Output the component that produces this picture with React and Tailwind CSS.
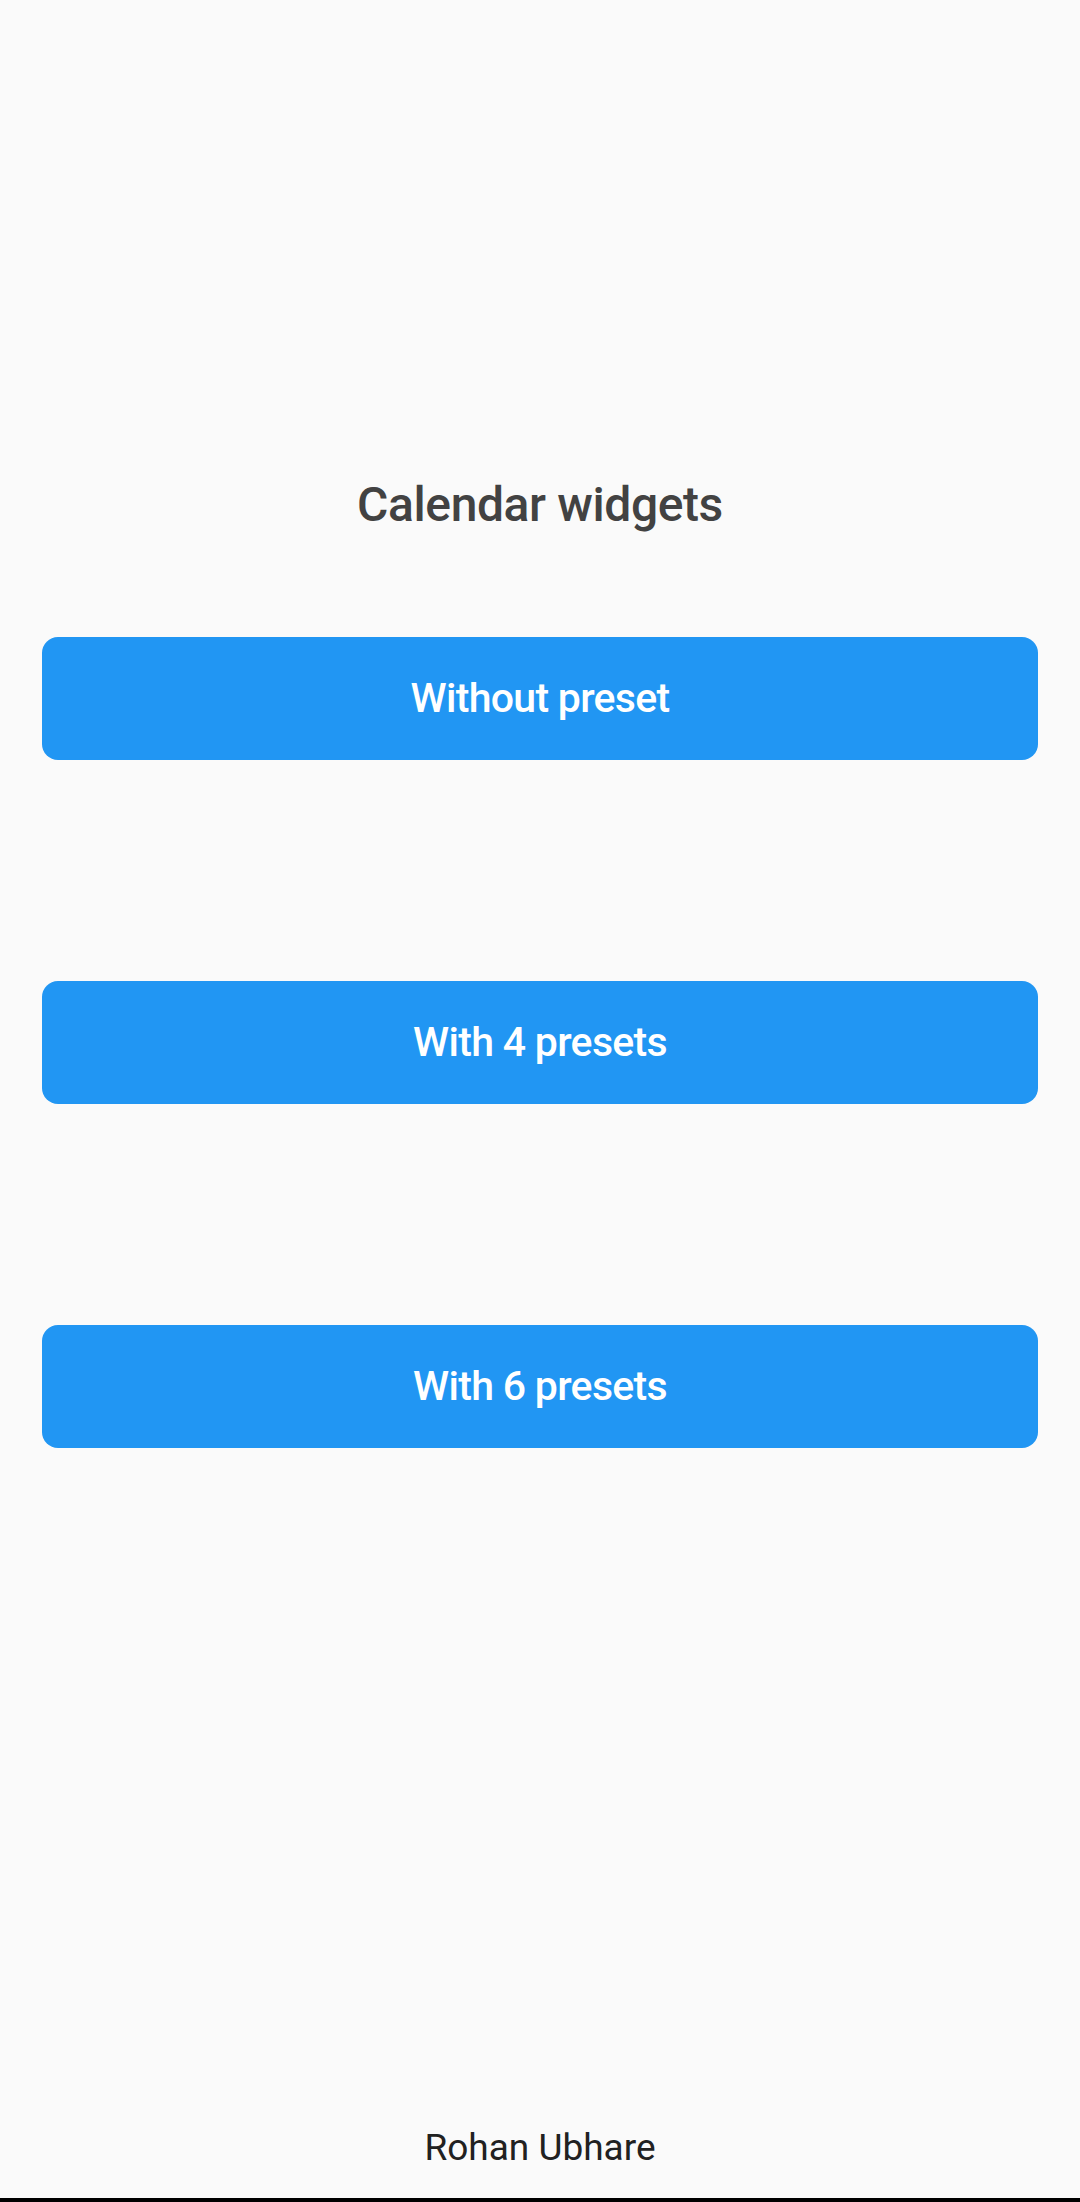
import React from 'react';

const presets = ['Without preset', 'With 4 presets', 'With 6 presets'];

const App = () => {
  return (
    <div
      className="h-[2202px] w-full flex flex-col bg-[#fafafa] overflow-hidden"
      style={{ fontFamily: 'Roboto, "Noto Sans", sans-serif' }}
    >
      <h1 className="pt-[481px] text-center text-[48px] leading-[48px] font-medium tracking-[-0.4px] text-[#424242]">
        Calendar widgets
      </h1>

      <div className="mt-[108px] px-[42px] flex flex-col gap-[221px]">
        {presets.map((label) => (
          <button
            key={label}
            className="h-[123px] w-full rounded-[16px] bg-[#2196f3] flex items-center justify-center text-white text-[41px] leading-[41px] font-medium tracking-[-0.7px]"
          >
            {label}
          </button>
        ))}
      </div>

      <p className="mt-auto text-center text-[37px] leading-[37px] text-[#212121]">
        Rohan Ubhare
      </p>
      <div className="mt-[32px] h-[4px] w-full bg-black" />
    </div>
  );
};

export default App;
